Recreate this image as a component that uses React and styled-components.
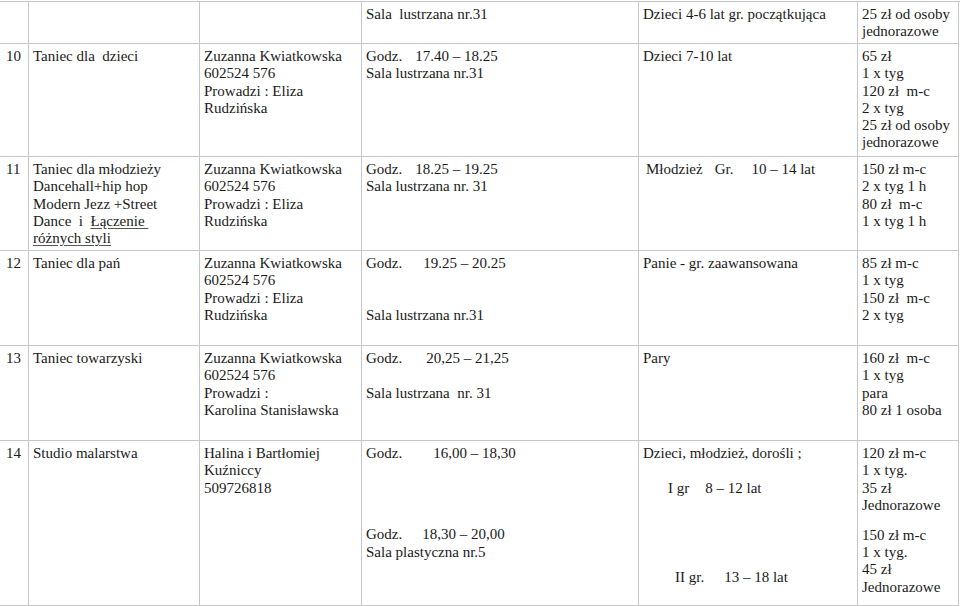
import React from "react";
import styled, { createGlobalStyle } from "styled-components";

const Global = createGlobalStyle`
  html, body { margin: 0; padding: 0; background: #ffffff; }
  body { font-family: "Liberation Serif", "Times New Roman", serif; }
`;

const Page = styled.div`
  width: 960px;
  height: 606px;
  overflow: hidden;
  background: #ffffff;
  padding-top: 1px;
  box-sizing: border-box;
`;

const Table = styled.div`
  display: grid;
  grid-template-columns: 29px 171px 162px 277px 219px 101px;
  grid-template-rows: 42px 113px 94px 95px 95px 165px;
  border-top: 1px solid #c6c6c6;
  color: #1a1a1a;
  font-size: 15px;
  line-height: 17.3px;
`;

const Cell = styled.div`
  box-sizing: border-box;
  border-right: 1px solid #c6c6c6;
  border-bottom: 1px solid #c6c6c6;
  padding: 4px 2px 0 ${(p) => (p.$pl != null ? p.$pl : 4)}px;
  overflow: hidden;
`;

const Line = styled.div`
  white-space: pre;
  min-height: 17.3px;
  padding-left: ${(p) => p.$indent || 0}px;
`;

const Gap = styled.div`
  height: ${(p) => p.$h}px;
`;

const Slot = styled.span`
  display: inline-block;
  margin-left: ${(p) => p.$gap}px;
`;

const Under = styled.span`
  text-decoration: underline;
  text-decoration-color: #555555;
  text-underline-offset: 2px;
`;

const Time = ({ gap, children }) => (
  <Line>
    Godz.<Slot $gap={gap}>{children}</Slot>
  </Line>
);

const Lines = ({ items }) => items.map((t, i) => <Line key={i}>{t}</Line>);

const teacherEliza = ["Zuzanna Kwiatkowska", "602524 576", "Prowadzi : Eliza", "Rudzińska"];

export default function App() {
  return (
    <Page>
      <Global />
      <Table>
        {/* continuation row */}
        <Cell $pl={6} />
        <Cell />
        <Cell />
        <Cell>
          <Line>Sala  lustrzana nr.31</Line>
        </Cell>
        <Cell>
          <Line>Dzieci 4-6 lat gr. początkująca</Line>
        </Cell>
        <Cell>
          <Lines items={["25 zł od osoby", "jednorazowe"]} />
        </Cell>

        {/* 10 */}
        <Cell $pl={6}>
          <Line>10</Line>
        </Cell>
        <Cell>
          <Line>Taniec dla  dzieci</Line>
        </Cell>
        <Cell>
          <Lines items={teacherEliza} />
        </Cell>
        <Cell>
          <Time gap={13}>17.40 – 18.25</Time>
          <Line>Sala lustrzana nr.31</Line>
        </Cell>
        <Cell>
          <Line>Dzieci 7-10 lat</Line>
        </Cell>
        <Cell>
          <Lines
            items={["65 zł", "1 x tyg", "120 zł  m-c", "2 x tyg", "25 zł od osoby", "jednorazowe"]}
          />
        </Cell>

        {/* 11 */}
        <Cell $pl={6}>
          <Line>11</Line>
        </Cell>
        <Cell>
          <Line>Taniec dla młodzieży</Line>
          <Line>Dancehall+hip hop</Line>
          <Line>Modern Jezz +Street</Line>
          <Line>
            Dance  i  <Under>Łączenie </Under>
          </Line>
          <Line>
            <Under>różnych styli</Under>
          </Line>
        </Cell>
        <Cell>
          <Lines items={teacherEliza} />
        </Cell>
        <Cell>
          <Time gap={13}>18.25 – 19.25</Time>
          <Line>Sala lustrzana nr. 31</Line>
        </Cell>
        <Cell>
          <Line $indent={3}>
            Młodzież<Slot $gap={12}>Gr.</Slot>
            <Slot $gap={18}>10 – 14 lat</Slot>
          </Line>
        </Cell>
        <Cell>
          <Lines items={["150 zł m-c", "2 x tyg 1 h", "80 zł  m-c", "1 x tyg 1 h"]} />
        </Cell>

        {/* 12 */}
        <Cell $pl={6}>
          <Line>12</Line>
        </Cell>
        <Cell>
          <Line>Taniec dla pań</Line>
        </Cell>
        <Cell>
          <Lines items={teacherEliza} />
        </Cell>
        <Cell>
          <Time gap={21}>19.25 – 20.25</Time>
          <Gap $h={35} />
          <Line>Sala lustrzana nr.31</Line>
        </Cell>
        <Cell>
          <Line>Panie - gr. zaawansowana</Line>
        </Cell>
        <Cell>
          <Lines items={["85 zł m-c", "1 x tyg", "150 zł  m-c", "2 x tyg"]} />
        </Cell>

        {/* 13 */}
        <Cell $pl={6}>
          <Line>13</Line>
        </Cell>
        <Cell>
          <Line>Taniec towarzyski</Line>
        </Cell>
        <Cell>
          <Lines
            items={["Zuzanna Kwiatkowska", "602524 576", "Prowadzi :", "Karolina Stanisławska"]}
          />
        </Cell>
        <Cell>
          <Time gap={24}>20,25 – 21,25</Time>
          <Gap $h={17.4} />
          <Line>Sala lustrzana  nr. 31</Line>
        </Cell>
        <Cell>
          <Line>Pary</Line>
        </Cell>
        <Cell>
          <Lines items={["160 zł  m-c", "1 x tyg", "para", "80 zł 1 osoba"]} />
        </Cell>

        {/* 14 */}
        <Cell $pl={6}>
          <Line>14</Line>
        </Cell>
        <Cell>
          <Line>Studio malarstwa</Line>
        </Cell>
        <Cell>
          <Lines items={["Halina i Bartłomiej", "Kuźniccy", "509726818"]} />
        </Cell>
        <Cell>
          <Time gap={31}>16,00 – 18,30</Time>
          <Gap $h={64} />
          <Time gap={20}>18,30 – 20,00</Time>
          <Line>Sala plastyczna nr.5</Line>
        </Cell>
        <Cell>
          <Line>Dzieci, młodzież, dorośli ;</Line>
          <Gap $h={17.7} />
          <Line $indent={25}>
            I gr<Slot $gap={16}>8 – 12 lat</Slot>
          </Line>
          <Gap $h={71.7} />
          <Line $indent={32}>
            II gr.<Slot $gap={20}>13 – 18 lat</Slot>
          </Line>
        </Cell>
        <Cell>
          <Lines items={["120 zł m-c", "1 x tyg.", "35 zł", "Jednorazowe"]} />
          <Gap $h={12.7} />
          <Lines items={["150 zł m-c", "1 x tyg.", "45 zł", "Jednorazowe"]} />
        </Cell>
      </Table>
    </Page>
  );
}
